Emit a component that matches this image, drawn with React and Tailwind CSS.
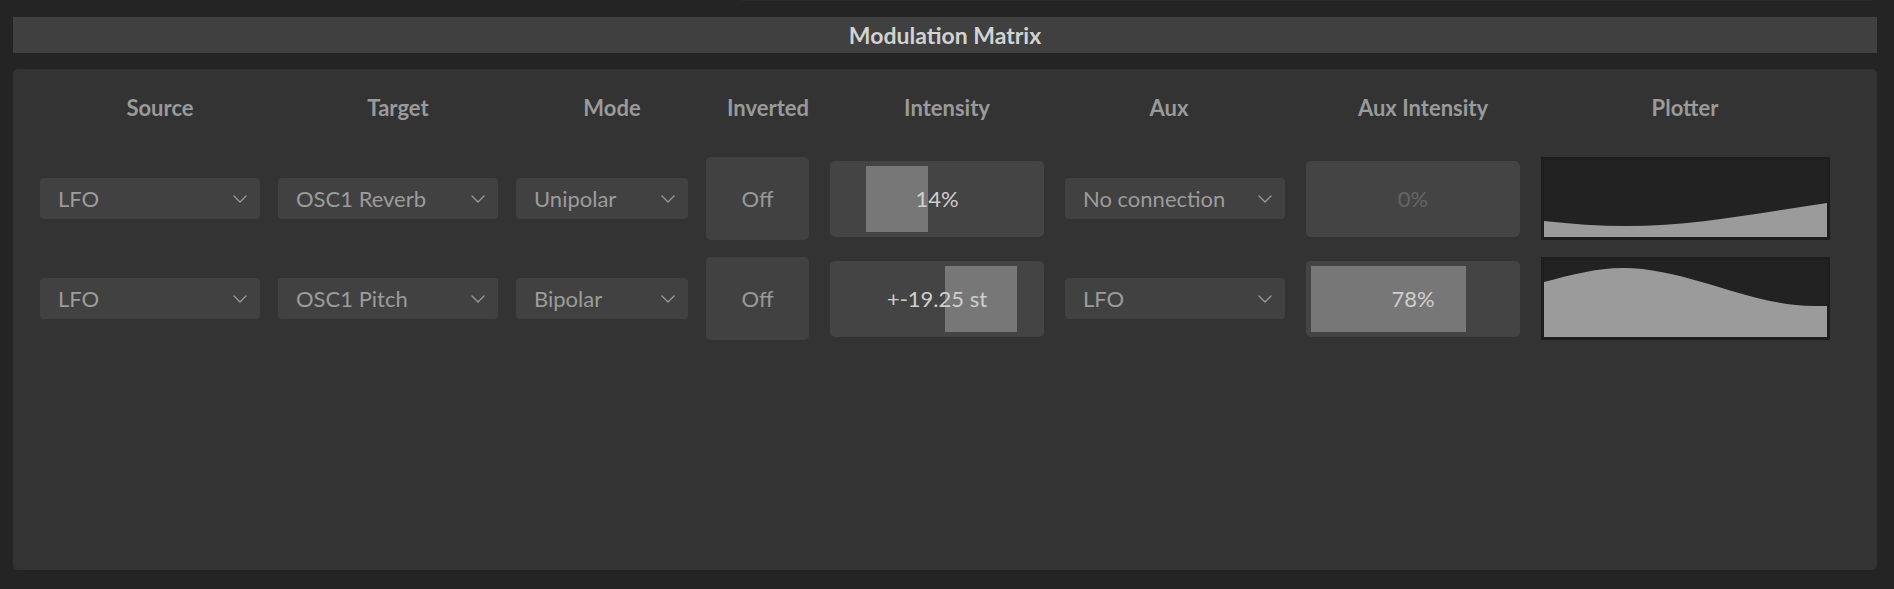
import React from 'react';

const HEADERS = [
  { label: 'Source', w: 'w-[240px]' },
  { label: 'Target', w: 'w-[236px]' },
  { label: 'Mode', w: 'w-[192px]' },
  { label: 'Inverted', w: 'w-[120px]' },
  { label: 'Intensity', w: 'w-[238px]' },
  { label: 'Aux', w: 'w-[206px]' },
  { label: 'Aux Intensity', w: 'w-[302px]' },
  { label: 'Plotter', w: 'w-[222px]' },
];

const ROWS = [
  {
    source: 'LFO',
    target: 'OSC1 Reverb',
    mode: 'Unipolar',
    inverted: 'Off',
    intensity: { text: '14%', left: 36, width: 62 },
    aux: 'No connection',
    auxIntensity: { text: '0%', left: 0, width: 0, dim: true },
    wave: 'M0,61 C28,64 55,66 83,66 C150,66 215,53 283,43 L283,77 L0,77 Z',
  },
  {
    source: 'LFO',
    target: 'OSC1 Pitch',
    mode: 'Bipolar',
    inverted: 'Off',
    intensity: { text: '+-19.25 st', left: 115, width: 72 },
    aux: 'LFO',
    auxIntensity: { text: '78%', left: 5, width: 155 },
    wave: 'M0,22 C27,15 52,8 79,8 C143,8 206,46 270,46 L283,46 L283,77 L0,77 Z',
  },
];

function Chevron() {
  return (
    <svg width="14" height="8" viewBox="0 0 14 8" fill="none">
      <path d="M1 1 L7 7 L13 1" stroke="#9a9a9a" strokeWidth="1.3" strokeLinecap="round" strokeLinejoin="round" />
    </svg>
  );
}

function Dropdown({ value, className }) {
  return (
    <div className={`h-[41px] rounded-[4px] bg-[#414141] flex items-center justify-between pl-[18px] pr-[13px] text-[22px] text-[#9c9c9c] ${className}`}>
      <span className="leading-none">{value}</span>
      <Chevron />
    </div>
  );
}

function Slider({ data, className }) {
  return (
    <div className={`relative h-[76px] rounded-[5px] bg-[#444444] flex items-center justify-center ${className}`}>
      {data.width > 0 && (
        <div className="absolute top-[5px] bottom-[5px] bg-[#777777]" style={{ left: data.left, width: data.width }} />
      )}
      <span className={`relative text-[22px] leading-none ${data.dim ? 'text-[#656565]' : 'text-[#cfcfcf]'}`}>{data.text}</span>
    </div>
  );
}

function Plotter({ wave }) {
  return (
    <div className="w-[289px] h-[83px] ml-[21px] bg-[#222222] border-[3px] border-[#1e1e1e]">
      <svg className="w-full h-full block" viewBox="0 0 283 77" preserveAspectRatio="none">
        <path d={wave} fill="#9b9b9b" />
      </svg>
    </div>
  );
}

export default function App() {
  return (
    <div className="w-[1894px] h-[589px] bg-[#242424] overflow-hidden font-['Lato','Noto_Sans',sans-serif]">
      <div className="h-px ml-[742px] w-[1131px] bg-[#2a2a2a]" />

      {/* 标题栏 */}
      <div className="mt-[16px] ml-[13px] w-[1864px] h-[36px] bg-[#404040] flex items-center justify-center text-[23px] font-bold text-[#d2d2d2]">
        Modulation Matrix
      </div>

      {/* 矩阵面板 */}
      <div className="mt-[16px] ml-[13px] w-[1864px] h-[501px] rounded-[5px] bg-[#333333] pt-[26px] pl-[27px]">
        <div className="flex">
          {HEADERS.map((h) => (
            <div key={h.label} className={`${h.w} text-center text-[22px] leading-[26px] font-bold text-[#9a9a9a]`}>
              {h.label}
            </div>
          ))}
        </div>

        <div className="mt-[36px] flex flex-col gap-[17px]">
          {ROWS.map((r, i) => (
            <div key={i} className="h-[83px] flex items-center">
              <Dropdown value={r.source} className="w-[220px]" />
              <Dropdown value={r.target} className="w-[220px] ml-[18px]" />
              <Dropdown value={r.mode} className="w-[172px] ml-[18px]" />
              <div className="w-[103px] h-[83px] ml-[18px] rounded-[5px] bg-[#414141] flex items-center justify-center text-[22px] text-[#999999]">
                {r.inverted}
              </div>
              <Slider data={r.intensity} className="w-[214px] ml-[21px]" />
              <Dropdown value={r.aux} className="w-[220px] ml-[21px]" />
              <Slider data={r.auxIntensity} className="w-[214px] ml-[21px]" />
              <Plotter wave={r.wave} />
            </div>
          ))}
        </div>
      </div>
    </div>
  );
}
